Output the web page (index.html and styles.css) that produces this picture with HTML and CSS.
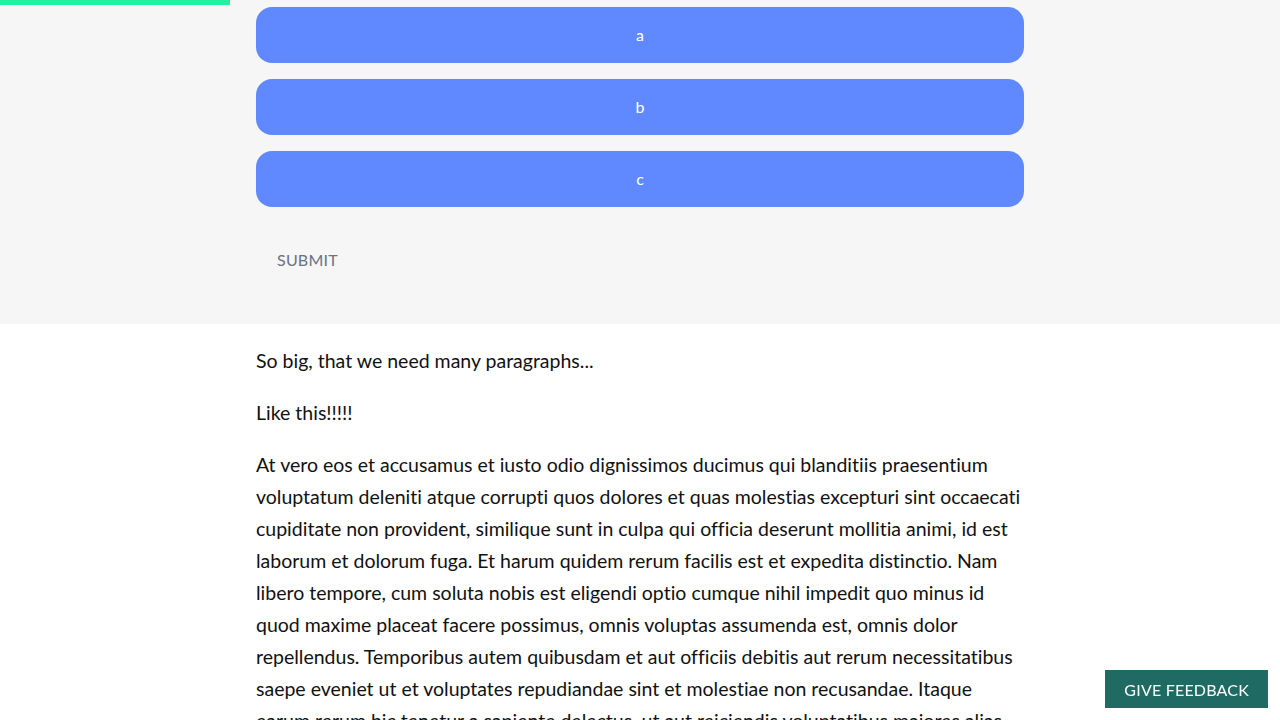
FILE: index.html
```html
<!DOCTYPE html>
<html>
<head>
<meta charset="utf-8">
<link rel="stylesheet" href="styles.css">
</head>
<body>
<div class="progress"></div>
<section class="quiz">
  <div class="wrap">
    <div class="options">
      <button class="opt">a</button>
      <button class="opt">b</button>
      <button class="opt">c</button>
    </div>
    <button class="submit">SUBMIT</button>
  </div>
</section>
<main class="wrap text">
  <p>So big, that we need many paragraphs...</p>
  <p>Like this!!!!!</p>
  <p>At vero eos et accusamus et iusto odio dignissimos ducimus qui blanditiis praesentium voluptatum deleniti atque corrupti quos dolores et quas molestias excepturi sint occaecati cupiditate non provident, similique sunt in culpa qui officia deserunt mollitia animi, id est laborum et dolorum fuga. Et harum quidem rerum facilis est et expedita distinctio. Nam libero tempore, cum soluta nobis est eligendi optio cumque nihil impedit quo minus id quod maxime placeat facere possimus, omnis voluptas assumenda est, omnis dolor repellendus. Temporibus autem quibusdam et aut officiis debitis aut rerum necessitatibus saepe eveniet ut et voluptates repudiandae sint et molestiae non recusandae. Itaque earum rerum hic tenetur a sapiente delectus, ut aut reiciendis voluptatibus maiores alias consequatur aut perferendis doloribus asperiores repellat.</p>
</main>
<button class="feedback">GIVE FEEDBACK</button>
</body>
</html>
```
FILE: styles.css
```css
html, body {
  margin: 0;
  padding: 0;
  background: #ffffff;
  font-family: Lato, "Liberation Sans", sans-serif;
  overflow: hidden;
}
.progress {
  position: fixed;
  top: 0;
  left: 0;
  width: 230px;
  height: 5px;
  background: #23f0a0;
  z-index: 5;
}
.quiz {
  background: #f6f6f6;
  padding: 7px 0 44px;
}
.wrap {
  width: 768px;
  margin: 0 auto;
}
.options {
  display: flex;
  flex-direction: column;
  gap: 16px;
}
.opt {
  height: 56px;
  border: none;
  border-radius: 16px;
  background: #6189ff;
  color: #ffffff;
  font-family: Lato, "Liberation Sans", sans-serif;
  font-size: 16px;
  line-height: 54px;
  padding: 0;
}
.submit {
  margin-top: 33px;
  height: 40px;
  line-height: 38px;
  padding: 0 21px;
  border: none;
  background: transparent;
  color: #6b7280;
  font-family: Lato, "Liberation Sans", sans-serif;
  font-size: 16px;
  letter-spacing: 0.2px;
}
.text {
  padding-top: 21px;
  color: #111111;
  font-size: 19.5px;
  line-height: 32px;
  font-variant-ligatures: none;
}
.text p {
  margin: 0 0 20px;
}
.feedback {
  position: fixed;
  right: 12px;
  bottom: 12px;
  height: 38px;
  padding: 0 19px;
  border: none;
  background: #1f6b63;
  color: #ffffff;
  font-family: Lato, "Liberation Sans", sans-serif;
  font-size: 16px;
  letter-spacing: 0.2px;
  box-shadow: 0 0 0 2px #ffffff;
}
```
